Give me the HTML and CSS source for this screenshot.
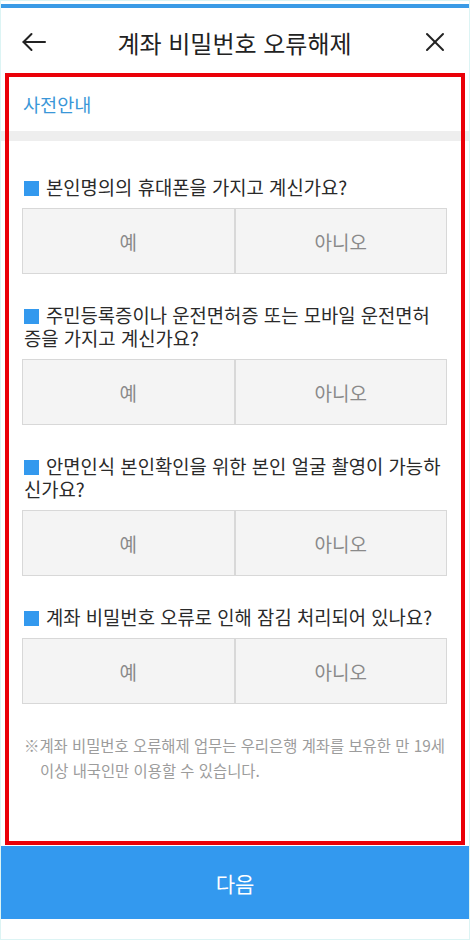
FILE: index.html
```html
<!DOCTYPE html>
<html lang="ko">
<head>
    <meta charset="UTF-8">
    <meta name="viewport" content="width=device-width, initial-scale=1.0">
    <title>계좌 비밀번호 오류해제</title>
    <link rel="stylesheet" href="styles.css">
</head>
<body>
    <div class="screen">
        <div class="top-bar"></div>
        <header class="header">
            <button class="icon-btn" aria-label="뒤로">
                <svg width="24" height="24" viewBox="0 0 24 24" fill="none" stroke="#222" stroke-width="2" stroke-linecap="round" stroke-linejoin="round">
                    <path d="M23 12H1.5"/>
                    <path d="M9.5 4L1.5 12l8 8"/>
                </svg>
            </button>
            <h1>계좌 비밀번호 오류해제</h1>
            <button class="icon-btn" aria-label="닫기">
                <svg width="20" height="20" viewBox="0 0 20 20" fill="none" stroke="#222" stroke-width="2" stroke-linecap="round">
                    <path d="M2 2l16 16"/>
                    <path d="M18 2L2 18"/>
                </svg>
            </button>
        </header>

        <div class="content">
            <div class="intro">사전안내</div>
            <div class="divider"></div>

            <div class="questions">
                <div class="question">
                    <p class="q-text"><span class="bullet"></span>본인명의의 휴대폰을 가지고 계신가요?</p>
                    <div class="answers">
                        <button class="answer">예</button>
                        <button class="answer">아니오</button>
                    </div>
                </div>
                <div class="question">
                    <p class="q-text"><span class="bullet"></span>주민등록증이나 운전면허증 또는 모바일 운전면허증을 가지고 계신가요?</p>
                    <div class="answers">
                        <button class="answer">예</button>
                        <button class="answer">아니오</button>
                    </div>
                </div>
                <div class="question">
                    <p class="q-text"><span class="bullet"></span>안면인식 본인확인을 위한 본인 얼굴 촬영이 가능하신가요?</p>
                    <div class="answers">
                        <button class="answer">예</button>
                        <button class="answer">아니오</button>
                    </div>
                </div>
                <div class="question">
                    <p class="q-text"><span class="bullet"></span>계좌 비밀번호 오류로 인해 잠김 처리되어 있나요?</p>
                    <div class="answers">
                        <button class="answer">예</button>
                        <button class="answer">아니오</button>
                    </div>
                </div>

                <p class="notice">※계좌 비밀번호 오류해제 업무는 우리은행 계좌를 보유한 만 19세 이상 내국인만 이용할 수 있습니다.</p>
            </div>
        </div>

        <button class="next-btn">다음</button>
        <div class="bottom-space"></div>

        <div class="highlight"></div>
    </div>
</body>
</html>
```

FILE: styles.css
```css
* {
    box-sizing: border-box;
}
body {
    margin: 0;
    font-family: "Noto Sans CJK KR", "Noto Sans", sans-serif;
    background-color: #ffffff;
}
.screen {
    position: relative;
    width: 470px;
    height: 940px;
    border: 1px solid #dcf4f4;
    padding-top: 3px;
    display: flex;
    flex-direction: column;
    background-color: #ffffff;
}
.top-bar {
    height: 4px;
    background-color: #3a9be6;
}
.header {
    height: 68px;
    display: flex;
    align-items: center;
    justify-content: space-between;
    padding: 0 22px 0 21px;
}
.header h1 {
    margin: 0;
    font-size: 24px;
    font-weight: 400;
    color: #222;
}
.icon-btn {
    background: none;
    border: none;
    padding: 0;
    width: 24px;
    height: 24px;
    display: flex;
    align-items: center;
    justify-content: center;
}
.content {
    flex: 1;
}
.intro {
    height: 55px;
    line-height: 55px;
    padding-left: 22px;
    font-size: 18.6px;
    color: #3a97d8;
}
.divider {
    height: 10px;
    background-color: #eeeeee;
}
.questions {
    padding: 34px 22px 0 21px;
}
.question {
    margin-bottom: 29px;
}
.q-text {
    margin: 0 0 10px;
    padding-left: 2px;
    font-size: 18.8px;
    line-height: 23px;
    color: #2a2a2a;
}
.bullet {
    display: inline-block;
    width: 15px;
    height: 15px;
    margin-right: 7px;
    background-color: #3399ee;
    vertical-align: -1px;
}
.answers {
    display: flex;
    height: 66px;
}
.answer {
    flex: 1;
    border: 1px solid #d8d8d8;
    background-color: #f4f4f4;
    font-family: inherit;
    font-size: 19px;
    color: #8a8a8a;
}
.notice {
    margin: 0;
    padding-left: 18px;
    text-indent: -16px;
    font-size: 15.4px;
    line-height: 25px;
    color: #9c9c9c;
}
.next-btn {
    height: 73px;
    border: none;
    background-color: #3399ef;
    color: #ffffff;
    font-family: inherit;
    font-size: 21px;
}
.bottom-space {
    height: 20px;
}
.highlight {
    position: absolute;
    left: 4px;
    top: 72px;
    width: 460px;
    height: 772px;
    border: 4px solid #ea0008;
    pointer-events: none;
}
```
